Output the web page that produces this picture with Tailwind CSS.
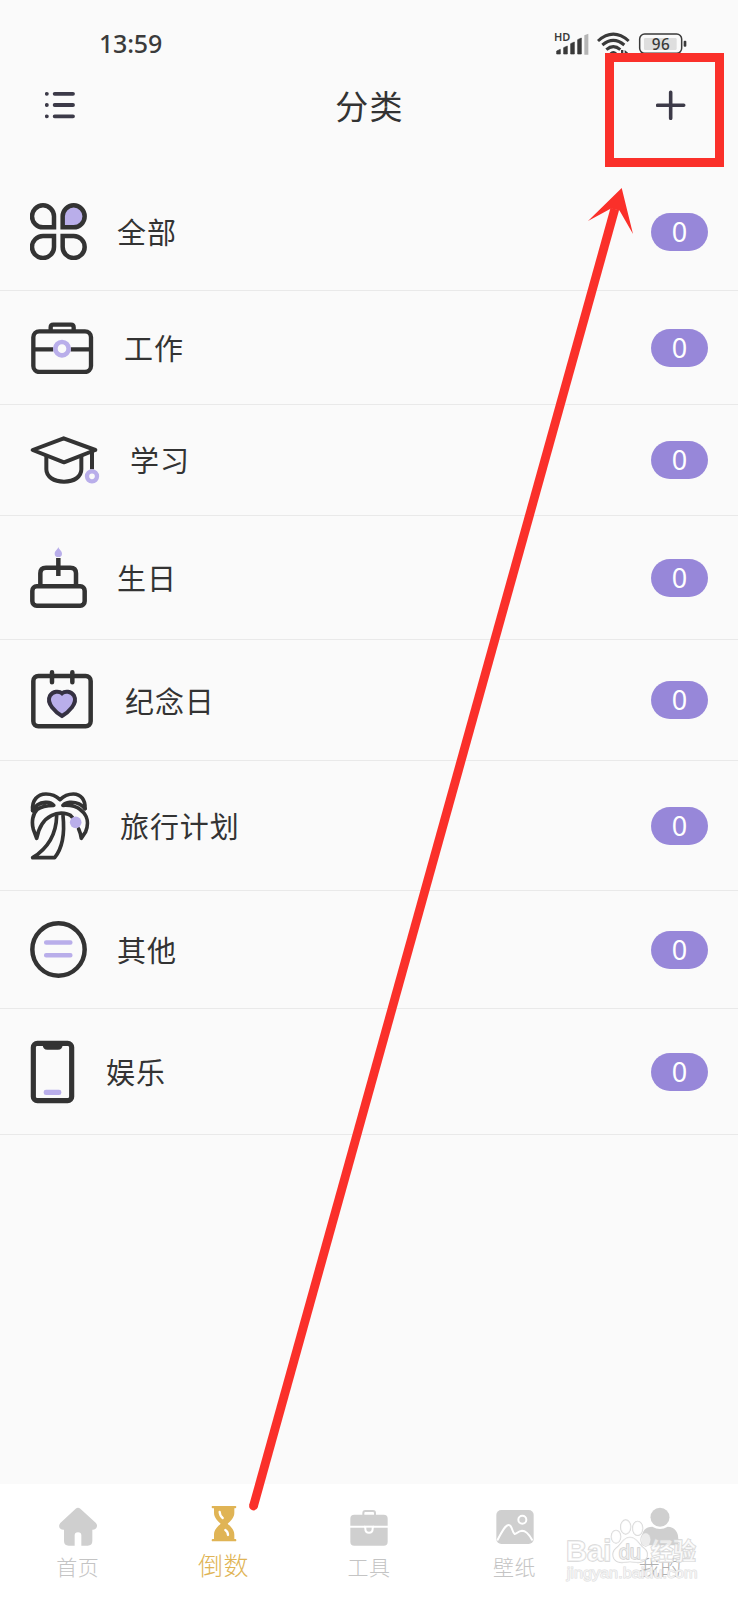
<!DOCTYPE html>
<html lang="zh-CN">
<head>
<meta charset="utf-8">
<title>分类</title>
<script src="https://cdn.jsdelivr.net/npm/@tailwindcss/browser@4"></script>
</head>
<body class="bg-[#fafafa]">
<div class="relative flex h-[1600px] w-[738px] flex-col overflow-hidden bg-[#fafafa] font-['Noto_Sans_CJK_SC',sans-serif] text-[#333]">

  <!-- status bar -->
  <div class="flex h-[64px] items-start justify-between pl-[99px] pr-[50px]">
    <div class="mt-[27px] font-['Noto_Sans',sans-serif] text-[25px] font-medium leading-[32px] tracking-[-0.2px] text-[#3b3b3b]">13:59</div>
    <svg class="mt-[30px]" width="134" height="26" viewBox="0 0 402 78" fill="#3a3a3a">
      <text x="0" y="33" font-family="Noto Sans" font-weight="600" font-size="32" textLength="49" lengthAdjust="spacingAndGlyphs">HD</text>
      <path d="M8 63L19 58V72H8ZM29 53L40 48V72H29ZM50 41L61 36V72H50ZM71 29L82 24V72H71Z" stroke="#3a3a3a" stroke-width="2" stroke-linejoin="round"/>
      <path d="M91 16L103 11V74H91Z" fill="#b5b5b5"/>
      <g fill="none" stroke="#3a3a3a" stroke-width="9">
        <path d="M132 33Q178 -8 224 33"/><path d="M145 45Q178 17 211 45"/><path d="M157 59Q178 41 199 59"/>
      </g>
      <path d="M167 68Q178 58 189 68L183 76H173ZM201 60h7v16h-7zM212 60l10 8v8h-10z"/>
      <rect x="257" y="12" width="126" height="58" rx="15" fill="none" stroke="#3a3a3a" stroke-width="4.500"/>
      <rect x="270" y="24" width="98" height="36" rx="4" fill="#dedede"/>
      <rect x="389" y="32" width="8" height="18" rx="3"/>
      <text x="320" y="59" text-anchor="middle" font-family="Noto Sans" font-weight="500" font-size="46" textLength="54">96</text>
    </svg>
  </div>

  <!-- title bar -->
  <header class="flex h-[109px] items-start justify-between pl-[45px] pr-[52px] pt-[26px]">
    <svg class="mt-[1px]" width="30" height="28" viewBox="135 274 90 84" fill="none" stroke="#3c3a48" stroke-linecap="round" stroke-width="11.500">
      <path d="M164 282.500h55M164 316h55M164 350h55"/><path d="M140.500 282.500h.1M140.500 316h.1M140.500 350h.1"/>
    </svg>
    <h1 class="-mt-[9px] ml-[8px] text-[33px] font-normal leading-[48px] tracking-[1.3px]">分类</h1>
    <svg width="30" height="30" viewBox="377 269 92 92" fill="none" stroke="#3c3a48" stroke-linecap="round" stroke-width="11"><path d="M382 316h80M422 276v80"/></svg>
  </header>

  <!-- categories -->
  <main class="flex flex-1 flex-col text-[29px] leading-[40px] tracking-[0.9px]">
    <div class="flex h-[118px] items-center border-b border-[#e9e9e9] pl-[30px] pr-[30px]">
      <svg width="57" height="57" viewBox="90 69 171 171" fill="none" stroke="#333" stroke-width="13.500">
        <path d="M129 76A33 33 0 1 0 129 142H162V109A33 33 0 0 0 129 76Z"/>
        <path d="M221 76A33 33 0 1 1 221 142H188V109A33 33 0 0 1 221 76Z" fill="#b9aeea"/>
        <path d="M129 234A33 33 0 1 1 129 168H162V201A33 33 0 0 1 129 234Z"/>
        <path d="M221 234A33 33 0 1 0 221 168H188V201A33 33 0 0 0 221 234Z"/>
      </svg>
      <span class="-mt-[1px] ml-[30px] flex-1">全部</span>
      <span class="flex h-[38px] w-[57px] items-center justify-center rounded-full bg-[#9787d9] font-['Noto_Sans',sans-serif] text-[27px] tracking-normal text-white">0</span>
    </div>
    <div class="flex h-[114px] items-center border-b border-[#e9e9e9] pl-[30px] pr-[30px]">
      <svg width="64" height="52" viewBox="90 424 192 156" fill="none" stroke="#333" stroke-width="13">
        <rect x="100" y="452" width="173" height="122" rx="18"/>
        <path d="M152 448V440Q152 432 160 432H213Q221 432 221 440V448"/>
        <path d="M100 506H160M212 506H272"/>
        <circle cx="186" cy="504" r="20" stroke="#b9aeea" stroke-width="14"/>
      </svg>
      <span class="-mt-[1px] ml-[30px] flex-1">工作</span>
      <span class="flex h-[38px] w-[57px] items-center justify-center rounded-full bg-[#9787d9] font-['Noto_Sans',sans-serif] text-[27px] tracking-normal text-white">0</span>
    </div>
    <div class="flex h-[111px] items-center border-b border-[#e9e9e9] pl-[30px] pr-[30px]">
      <svg width="70" height="50" viewBox="90 105 210 150" fill="none" stroke="#333" stroke-width="12" stroke-linejoin="round">
        <path d="M98 150L191 115L286 150L192 187Z"/>
        <path d="M139 168V208C139 230 161 245 192 245S244 230 244 208V168"/>
        <path d="M276 152V208"/>
        <circle cx="276" cy="229" r="15" stroke="#b9aeea" stroke-width="13"/>
      </svg>
      <span class="-mt-[2px] ml-[30px] flex-1">学习</span>
      <span class="flex h-[38px] w-[57px] items-center justify-center rounded-full bg-[#9787d9] font-['Noto_Sans',sans-serif] text-[27px] tracking-normal text-white">0</span>
    </div>
    <div class="flex h-[124px] items-center border-b border-[#e9e9e9] pl-[30px] pr-[30px]">
      <svg width="57" height="64" viewBox="90 436 171 192" fill="none" stroke="#333" stroke-width="13.500">
        <rect x="97" y="557" width="157" height="58" rx="13"/>
        <path d="M121 556V518Q121 501 138 501H211Q228 501 228 518V556"/>
        <path d="M175 472V526"/>
        <path d="M175 439C177 447 186 451 186 459A11 10 0 0 1 164 459C164 451 173 447 175 439Z" fill="#b9aeea" stroke="none"/>
      </svg>
      <span class="-mt-[1px] ml-[30px] flex-1">生日</span>
      <span class="flex h-[38px] w-[57px] items-center justify-center rounded-full bg-[#9787d9] font-['Noto_Sans',sans-serif] text-[27px] tracking-normal text-white">0</span>
    </div>
    <div class="flex h-[121px] items-center border-b border-[#e9e9e9] pl-[30px] pr-[30px]">
      <svg width="64" height="64" viewBox="90 84 192 192" fill="none" stroke="#333" stroke-width="13.500">
        <rect x="100" y="108" width="172" height="151" rx="15"/>
        <path d="M156 97V127M217 97V127" stroke-linecap="round"/>
        <path d="M186 160C177 152 159 153 150 167C143 180 149 193 157 203C165 214 179 224 186 228C193 224 207 214 215 203C223 193 229 180 222 167C213 153 195 152 186 160Z" fill="#b9aeea" stroke="#353142" stroke-width="12"/>
      </svg>
      <span class="-mt-[1px] ml-[31px] flex-1">纪念日</span>
      <span class="flex h-[38px] w-[57px] items-center justify-center rounded-full bg-[#9787d9] font-['Noto_Sans',sans-serif] text-[27px] tracking-normal text-white">0</span>
    </div>
    <div class="flex h-[130px] items-center border-b border-[#e9e9e9] pl-[30px] pr-[30px]">
      <svg width="60" height="70" viewBox="90 452 180 210" fill="none" stroke="#333" stroke-width="11" stroke-linejoin="round" stroke-linecap="round">
        <path d="M98 511C95 480 112 461 138 461C155 461 171 469 180 478C190 468 204 461 220 461C243 461 257 480 255 505"/>
        <path d="M98 511C105 496 120 487 136 486C148 485 156 488 161 495C142 495 122 499 111 508C98 521 94 545 100 567L110 594C116 563 130 538 154 526C169 518 188 517 202 521C210 523 214 526 217 531"/>
        <path d="M255 505C244 491 226 485 209 486C200 487 193 490 189 495C208 494 230 498 241 508C263 524 267 549 257 574L244 594C243 583 240 575 236 566"/>
        <path d="M170 526C169 574 149 620 98 652H164C190 620 194 574 189 526"/>
        <circle cx="227" cy="546" r="17.500" fill="#b9aeea" stroke="none"/>
      </svg>
      <span class="-mt-[1px] ml-[30px] flex-1">旅行计划</span>
      <span class="flex h-[38px] w-[57px] items-center justify-center rounded-full bg-[#9787d9] font-['Noto_Sans',sans-serif] text-[27px] tracking-normal text-white">0</span>
    </div>
    <div class="flex h-[118px] items-center border-b border-[#e9e9e9] pl-[30px] pr-[30px]">
      <svg width="57" height="57" viewBox="90 123 171 171" fill="none" stroke-width="13.500">
        <circle cx="175.500" cy="208.500" r="78.500" stroke="#333"/>
        <path d="M138.500 187.500H211M138.500 226H211" stroke="#b9aeea" stroke-linecap="round"/>
      </svg>
      <span class="-mt-[1px] ml-[30px] flex-1">其他</span>
      <span class="flex h-[38px] w-[57px] items-center justify-center rounded-full bg-[#9787d9] font-['Noto_Sans',sans-serif] text-[27px] tracking-normal text-white">0</span>
    </div>
    <div class="flex h-[126px] items-center border-b border-[#e9e9e9] pl-[30px] pr-[30px]">
      <svg width="45" height="64" viewBox="90 478 135 192" fill="none">
        <rect x="100" y="488" width="115" height="172" rx="12" stroke="#333" stroke-width="15.500"/>
        <path d="M128 492H188Q187 507 174 507H142Q129 507 128 492Z" fill="#333"/>
        <rect x="131" y="627" width="53" height="16" rx="7" fill="#b9aeea"/>
      </svg>
      <span class="-mt-[1px] ml-[31px] flex-1">娱乐</span>
      <span class="flex h-[38px] w-[57px] items-center justify-center rounded-full bg-[#9787d9] font-['Noto_Sans',sans-serif] text-[27px] tracking-normal text-white">0</span>
    </div>
  </main>

  <!-- tab bar -->
  <nav class="grid h-[116px] grid-cols-5 bg-white px-[5px] pt-[21px] text-[21px] font-light leading-[28px] tracking-[0.5px] text-[#c4c4c4]">
    <div class="flex flex-col items-center">
      <svg width="38" height="42" viewBox="176 105 114 126" fill="#cfcfcf"><path d="M226 116Q233 110 240 116L286 158Q293 165 288 174Q284 180 276 179V213Q276 227 262 227H243V196Q243 187 233 187T223 196V227H205Q191 227 191 213V179Q182 180 178 174Q174 166 180 159Z"/></svg>
      <span class="mt-[5px]">首页</span>
    </div>
    <div class="flex flex-col items-center text-[25px] text-[#e0b455]">
      <svg class="ml-[2px]" width="26" height="42" viewBox="634 105 78 126"><path d="M639 108H707Q710 108 710 111T707 115H704V128C704 144 692 153 684 161C692 169 704 178 704 194V207H707Q710 207 710 210.500T707 214H639Q636 214 636 210.500T639 207H643V194C643 178 655 169 663 161C655 153 643 144 643 128V115H639Q636 115 636 111T639 108Z" fill="#e0b455"/><path d="M660 126Q661 138 669 144M677 180Q685 185 685 195" fill="none" stroke="#fff" stroke-width="7" stroke-linecap="round"/></svg>
      <span class="mt-[3px]">倒数</span>
    </div>
    <div class="flex flex-col items-center">
      <svg width="38" height="42" viewBox="1050 105 114 126" fill="#cfcfcf"><path d="M1090 136V129Q1090 123 1096 123H1119Q1125 123 1125 129V136" fill="none" stroke="#cfcfcf" stroke-width="6"/><rect x="1051" y="134" width="112" height="93" rx="12"/><path d="M1050 170H1094M1120 170H1164M1096 170V176Q1096 188 1107 188T1118 176V170" fill="none" stroke="#fff" stroke-width="6"/><path d="M1092 170H1122" stroke="#fff" stroke-width="6"/></svg>
      <span class="mt-[5px]">工具</span>
    </div>
    <div class="flex flex-col items-center">
      <svg width="38" height="42" viewBox="287 105 114 126"><rect x="288" y="120" width="112" height="102" rx="15" fill="#cfcfcf"/><g fill="none" stroke="#fff" stroke-width="6" stroke-linecap="round"><circle cx="366" cy="149" r="12"/><path d="M292 209C305 184 315 165 325 165C336 165 335 188 343 192C350 191 353 183 365 182C380 182 389 198 395 209"/></g></svg>
      <span class="mt-[5px]">壁纸</span>
    </div>
    <div class="flex flex-col items-center">
      <svg width="38" height="42" viewBox="724 105 114 126" fill="#cfcfcf"><circle cx="781" cy="142" r="28.500"/><path d="M726 226V207Q727 170 758 170Q781 184 804 170Q835 172 836 207V226Z"/></svg>
      <span class="mt-[5px] text-[#b0b0b0]">我的</span>
    </div>
  </nav>

  <!-- watermark -->
  <svg class="absolute left-[560px] top-[1500px]" width="150" height="100" viewBox="0 0 450 300" fill="#fff" fill-opacity=".6" stroke="#d6d6d6" stroke-width="4" paint-order="stroke">
    <text x="18" y="184" font-family="Liberation Sans" font-weight="700" font-size="86" textLength="136" lengthAdjust="spacingAndGlyphs">Bai</text>
    <ellipse cx="168" cy="110" rx="14" ry="19"/><ellipse cx="197" cy="81" rx="15" ry="21"/><ellipse cx="233" cy="85" rx="15" ry="21"/><ellipse cx="257" cy="119" rx="14" ry="19"/>
    <path d="M210 112C232 112 234 133 252 145C270 160 262 184 240 187C228 189 222 185 210 185S192 189 180 187C158 184 152 160 168 145C186 133 188 112 210 112Z"/>
    <text x="176" y="178" font-family="Liberation Sans" font-weight="400" font-size="58" textLength="67" lengthAdjust="spacingAndGlyphs" stroke="#cfcfcf">du</text>
    <text x="272" y="180" font-family="Noto Sans CJK SC" font-weight="700" font-size="70" textLength="136" lengthAdjust="spacingAndGlyphs">经验</text>
    <text x="20" y="234" font-family="Liberation Sans" font-size="44" textLength="393" lengthAdjust="spacingAndGlyphs" stroke="#dedede" stroke-width="3">jingyan.baidu.com</text>
  </svg>

  <!-- callout box and arrow -->
  <svg class="pointer-events-none absolute inset-0" width="738" height="1600" viewBox="0 0 738 1600">
    <rect x="609.500" y="57.500" width="110" height="105" fill="none" stroke="#fa302a" stroke-width="9"/>
    <circle cx="253.500" cy="1506" r="4.400" fill="#fa302a"/>
    <path d="M253.500 1506L614.800 209" stroke="#fa302a" stroke-width="8.800"/>
    <path d="M621.700 188L588 221L611 208.500L619.500 210.500L633 234Z" fill="#fa302a"/>
  </svg>
</div>
</body>
</html>
